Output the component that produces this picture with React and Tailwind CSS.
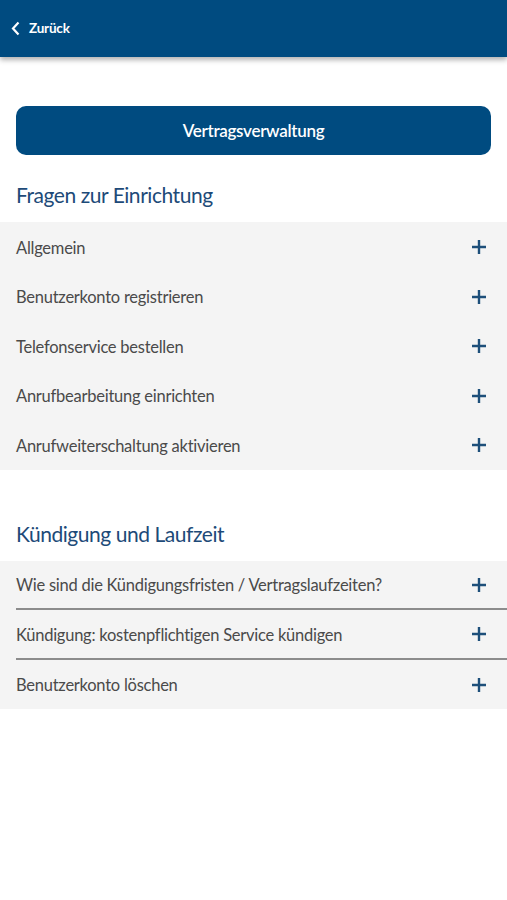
import React from 'react';

const Plus = () => (
  <svg width="16" height="16" viewBox="0 0 16 16" className="shrink-0 mt-[1px]">
    <path d="M8 1v14M1 8h14" stroke="#1d4f7a" strokeWidth="2.4" strokeLinecap="butt" />
  </svg>
);

const Row = ({ label, divider }) => (
  <div className="pl-4">
    <div className={`flex items-center justify-between h-[49.5px] pr-5 ${divider ? 'border-b-2 border-[#8c8c8c]' : ''}`}>
      <span className="text-[16.5px] text-[#4a4a4a] tracking-[-0.25px] pt-[3px]">{label}</span>
      <Plus />
    </div>
  </div>
);

const Section = ({ title, items, divided }) => (
  <div>
    <h2 className="px-4 text-[21px] leading-[28px] text-[#1d4a78] tracking-[-0.45px] pt-[26px] pb-[13px]">{title}</h2>
    <div className="bg-[#f4f4f4]">
      {items.map((item, i) => (
        <Row key={item} label={item} divider={divided && i < items.length - 1} />
      ))}
    </div>
  </div>
);

const App = () => {
  const setup = [
    'Allgemein',
    'Benutzerkonto registrieren',
    'Telefonservice bestellen',
    'Anrufbearbeitung einrichten',
    'Anrufweiterschaltung aktivieren',
  ];
  const termination = [
    'Wie sind die Kündigungsfristen / Vertragslaufzeiten?',
    'Kündigung: kostenpflichtigen Service kündigen',
    'Benutzerkonto löschen',
  ];

  return (
    <div className="min-h-[900px] bg-white" style={{ fontFamily: 'Lato, "Open Sans", sans-serif' }}>
      {/* Top bar */}
      <div className="h-[57px] bg-[#004b80] flex items-center px-[11px] shadow-[0_3px_5px_rgba(0,0,0,0.3)]">
        <svg width="9" height="15" viewBox="0 0 9 15" className="mr-[9px]">
          <path d="M7.5 1.5L2 7.5l5.5 6" stroke="white" strokeWidth="2.2" fill="none" />
        </svg>
        <span className="text-white text-[13.5px] font-bold tracking-[-0.2px]">Zurück</span>
      </div>

      <div className="px-4 pt-[49px]">
        <button className="w-full h-[49px] rounded-[10px] bg-[#004b80] text-white text-[17px] font-semibold tracking-[-0.3px]">
          Vertragsverwaltung
        </button>
      </div>

      <Section title="Fragen zur Einrichtung" items={setup} />
      <div className="mt-[24px]">
        <Section title="Kündigung und Laufzeit" items={termination} divided />
      </div>
    </div>
  );
};

export default App;
